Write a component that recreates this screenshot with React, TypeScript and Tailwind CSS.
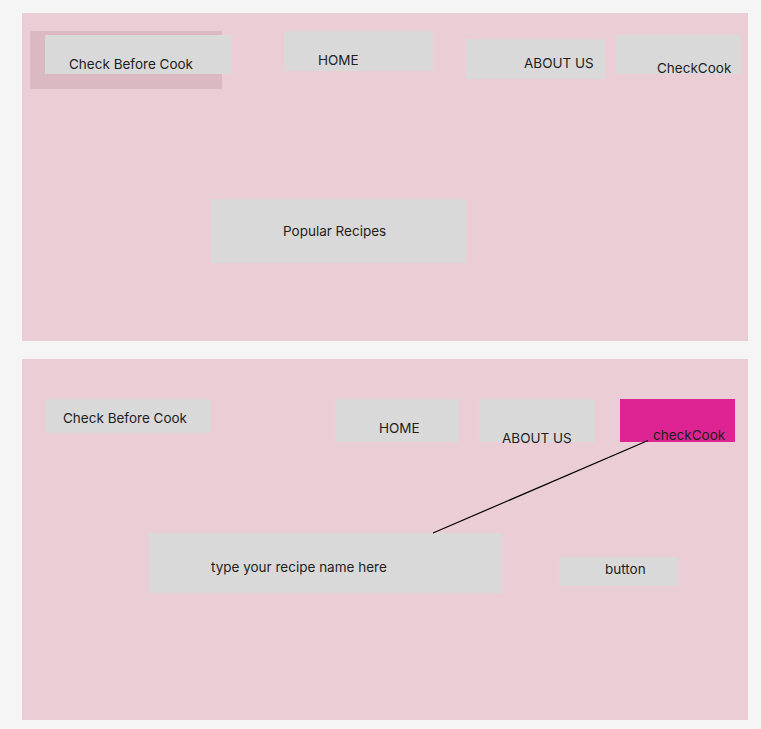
import React from "react";

type BoxProps = {
  className: string;
  text: string;
  textClass: string;
};

function Box({ className, text, textClass }: BoxProps) {
  return (
    <div className={`absolute ${className}`}>
      <span className={`absolute whitespace-nowrap text-[13.5px] leading-[17px] text-[#1e1e1e] ${textClass}`}>
        {text}
      </span>
    </div>
  );
}

export default function App() {
  return (
    <div
      className="min-h-[729px] w-[761px] bg-[#f5f5f5] pl-[22px] pt-[13px] pb-[9px] flex flex-col gap-[18px]"
      style={{ fontFamily: "Inter, 'Noto Sans', sans-serif" }}
    >
      {/* Frame 1 */}
      <div className="relative w-[726px] h-[328px] bg-[#ebcdd5]">
        <div className="absolute left-[8px] top-[18px] w-[192px] h-[58px] bg-[#dbb9c2]" />
        <Box
          className="left-[23px] top-[22px] w-[187px] h-[39px] bg-[#d9d9d9]"
          text="Check Before Cook"
          textClass="left-[24px] top-[21px]"
        />
        <Box
          className="left-[262px] top-[18px] w-[149px] h-[40px] bg-[#d9d9d9]"
          text="HOME"
          textClass="left-[34px] top-[21px]"
        />
        <Box
          className="left-[444px] top-[26px] w-[139px] h-[40px] bg-[#d9d9d9]"
          text="ABOUT US"
          textClass="left-[58px] top-[16px]"
        />
        <Box
          className="left-[594px] top-[22px] w-[125px] h-[39px] bg-[#d9d9d9]"
          text="CheckCook"
          textClass="left-[41px] top-[25px]"
        />
        <Box
          className="left-[189px] top-[186px] w-[255px] h-[64px] bg-[#d9d9d9]"
          text="Popular Recipes"
          textClass="left-[72px] top-[24px]"
        />
      </div>

      {/* Frame 2 */}
      <div className="relative w-[726px] h-[361px] bg-[#ebcdd5]">
        <Box
          className="left-[23px] top-[40px] w-[166px] h-[34px] bg-[#d9d9d9]"
          text="Check Before Cook"
          textClass="left-[18px] top-[11px]"
        />
        <Box
          className="left-[313px] top-[40px] w-[124px] h-[43px] bg-[#d9d9d9]"
          text="HOME"
          textClass="left-[44px] top-[21px]"
        />
        <Box
          className="left-[457px] top-[40px] w-[116px] h-[43px] bg-[#d9d9d9]"
          text="ABOUT US"
          textClass="left-[23px] top-[31px]"
        />
        <Box
          className="left-[598px] top-[40px] w-[115px] h-[43px] bg-[#de2492]"
          text="checkCook"
          textClass="left-[33px] top-[28px]"
        />
        <Box
          className="left-[127px] top-[174px] w-[353px] h-[60px] bg-[#d9d9d9]"
          text="type your recipe name here"
          textClass="left-[62px] top-[26px]"
        />
        <Box
          className="left-[537px] top-[198px] w-[119px] h-[29px] bg-[#d9d9d9]"
          text="button"
          textClass="left-[46px] top-[4px]"
        />
        <svg className="absolute left-0 top-0 pointer-events-none" width="726" height="361">
          <line x1="626" y1="81.5" x2="411" y2="174" stroke="#000" strokeWidth="1.2" />
        </svg>
      </div>
    </div>
  );
}
